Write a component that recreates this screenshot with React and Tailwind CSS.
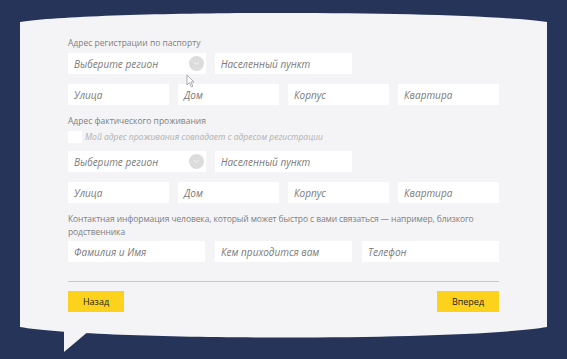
import React from "react";

function Field({ text, select = false }) {
  return (
    <div className="relative flex h-[21px] items-center bg-white pl-[6px]">
      <span className="italic text-[10px] leading-none text-[#7a7a7a]" style={{ fontFamily: '"Open Sans", "Noto Sans", sans-serif' }}>
        {text}
      </span>
      {select && (
        <span className="absolute right-[2px] top-[3px] flex h-[15px] w-[15px] items-center justify-center rounded-full bg-[#dcdcdc]">
          <svg width="7" height="5" viewBox="0 0 7 5" fill="none">
            <path d="M1 1l2.5 2.5L6 1" stroke="#f4f4f4" strokeWidth="1" />
          </svg>
        </span>
      )}
    </div>
  );
}

export default function App() {
  return (
    <div
      className="relative h-[359px] w-[567px] overflow-hidden bg-[#27345a]"
      style={{ fontFamily: '"Open Sans", "Noto Sans", sans-serif' }}
    >
      <svg className="absolute inset-0" width="567" height="359" viewBox="0 0 567 359">
        <path d="M20,22 C100,10 467,10 547,22 L547,327 C467,341 100,341 20,327 Z" fill="#f4f4f6" />
        <polygon points="64,320 64,352 96,325 96,320" fill="#f4f4f6" />
      </svg>

      <div className="relative flex w-[499px] flex-col pl-[68px] pt-[37px]">
        <div className="h-[12px] text-[8.5px] leading-[12px] text-[#808080]">Адрес регистрации по паспорту</div>

        <div className="mt-[4px] grid grid-cols-3 gap-[9px]">
          <Field text="Выберите регион" select />
          <Field text="Населенный пункт" />
        </div>

        <div className="mt-[10px] grid grid-cols-4 gap-[9px]">
          <Field text="Улица" />
          <Field text="Дом" />
          <Field text="Корпус" />
          <Field text="Квартира" />
        </div>

        <div className="mt-[10px] h-[12px] text-[8.5px] leading-[12px] text-[#808080]">Адрес фактического проживания</div>

        <div className="mt-[4px] flex h-[12px] items-center gap-[3px]">
          <span className="h-[12px] w-[14px] bg-white" />
          <span className="italic text-[8.5px] leading-none text-[#b0b0b0]">
            Мой адрес проживания совпадает с адресом регистрации
          </span>
        </div>

        <div className="mt-[8px] grid grid-cols-3 gap-[9px]">
          <Field text="Выберите регион" select />
          <Field text="Населенный пункт" />
        </div>

        <div className="mt-[10px] grid grid-cols-4 gap-[9px]">
          <Field text="Улица" />
          <Field text="Дом" />
          <Field text="Корпус" />
          <Field text="Квартира" />
        </div>

        <div className="mt-[9px] text-[8.5px] leading-[13px] tracking-[-0.1px] text-[#808080]">
          Контактная информация человека, который может быстро с вами связаться — например, близкого родственника
        </div>

        <div className="mt-[3px] grid grid-cols-3 gap-[10px]">
          <Field text="Фамилия и Имя" />
          <Field text="Кем приходится вам" />
          <Field text="Телефон" />
        </div>

        <div className="mt-[19px] h-px bg-[#c9c9cb]" />

        <div className="mt-[9px] flex justify-between">
          <button className="flex h-[21px] w-[56px] items-center justify-center bg-[#fcd21d] text-[9px] text-[#222]">
            Назад
          </button>
          <button className="flex h-[21px] w-[62px] items-center justify-center bg-[#fcd21d] text-[9px] text-[#222]">
            Вперед
          </button>
        </div>
      </div>

      <svg className="absolute left-[186px] top-[74px]" width="9" height="14" viewBox="0 0 9 14">
        <path d="M1 1 L1 11 L3.5 8.5 L5.5 13 L7 12.3 L5 8 L8 8 Z" fill="#ffffff" stroke="#9a9a9a" strokeWidth="0.8" />
      </svg>
    </div>
  );
}
